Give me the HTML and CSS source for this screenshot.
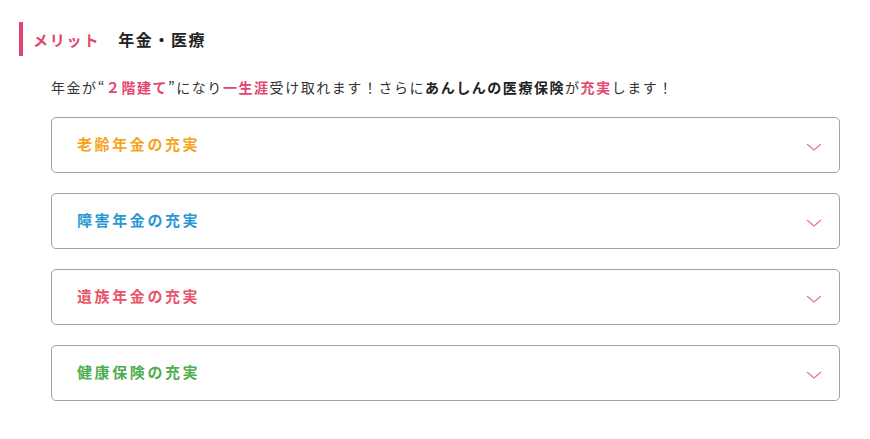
FILE: index.html
```html
<!DOCTYPE html>
<html lang="ja">
<head>
<meta charset="utf-8">
<link rel="stylesheet" href="styles.css">
</head>
<body>
<section class="merit">
  <h2 class="merit-head"><span class="merit-label">メリット</span><span class="merit-title">年金・医療</span></h2>
  <p class="lead">年金が“<span class="hl">２階建て</span>”になり<span class="hl">一生涯</span>受け取れます！さらに<strong>あんしんの医療保険</strong>が<span class="hl">充実</span>します！</p>
  <ul class="acc">
    <li class="acc-item"><span class="acc-title c-orange">老齢年金の充実</span><svg class="chev" viewBox="0 0 16 8" width="16" height="8"><path d="M1 1 L8 7 L15 1" fill="none" stroke="#e4708f" stroke-width="1.1"/></svg></li>
    <li class="acc-item"><span class="acc-title c-blue">障害年金の充実</span><svg class="chev" viewBox="0 0 16 8" width="16" height="8"><path d="M1 1 L8 7 L15 1" fill="none" stroke="#e4708f" stroke-width="1.1"/></svg></li>
    <li class="acc-item"><span class="acc-title c-red">遺族年金の充実</span><svg class="chev" viewBox="0 0 16 8" width="16" height="8"><path d="M1 1 L8 7 L15 1" fill="none" stroke="#e4708f" stroke-width="1.1"/></svg></li>
    <li class="acc-item"><span class="acc-title c-green">健康保険の充実</span><svg class="chev" viewBox="0 0 16 8" width="16" height="8"><path d="M1 1 L8 7 L15 1" fill="none" stroke="#e4708f" stroke-width="1.1"/></svg></li>
  </ul>
</section>
</body>
</html>
```
FILE: styles.css
```css
html, body {
  margin: 0;
  padding: 0;
  background: #fff;
}
body {
  font-family: "Noto Sans CJK JP", "Noto Sans", sans-serif;
  color: #333;
}
.merit {
  padding: 22px 30px 0 19px;
}
.merit-head {
  margin: 0;
  height: 34px;
  border-left: 4px solid #e2456d;
  padding-left: 10px;
  display: flex;
  align-items: center;
  font-weight: bold;
}
.merit-label {
  color: #e2456d;
  font-size: 15px;
  letter-spacing: 1.8px;
  margin-right: 18px;
}
.merit-title {
  color: #222;
  font-size: 16px;
  letter-spacing: 1.6px;
}
.lead {
  margin: 19px 0 0 32px;
  font-size: 14px;
  line-height: 24px;
  letter-spacing: 1.55px;
  color: #333;
}
.hl {
  color: #e2456d;
  font-weight: bold;
}
.lead strong {
  color: #222;
  font-weight: bold;
}
.acc {
  list-style: none;
  margin: 18px 0 0 32px;
  padding: 0;
  width: 789px;
  display: flex;
  flex-direction: column;
  gap: 20px;
}
.acc-item {
  box-sizing: border-box;
  height: 56px;
  border: 1px solid #a3a3a3;
  border-radius: 5px;
  display: flex;
  align-items: center;
  justify-content: space-between;
  padding: 0 17px 0 25px;
}
.acc-title {
  font-size: 15px;
  font-weight: bold;
  letter-spacing: 2.6px;
  margin-bottom: 3px;
}
.chev {
  display: block;
  margin-top: 3px;
}
.c-orange { color: #f4a41d; }
.c-blue { color: #2a98d3; }
.c-red { color: #e8546a; }
.c-green { color: #4fae4c; }
```
